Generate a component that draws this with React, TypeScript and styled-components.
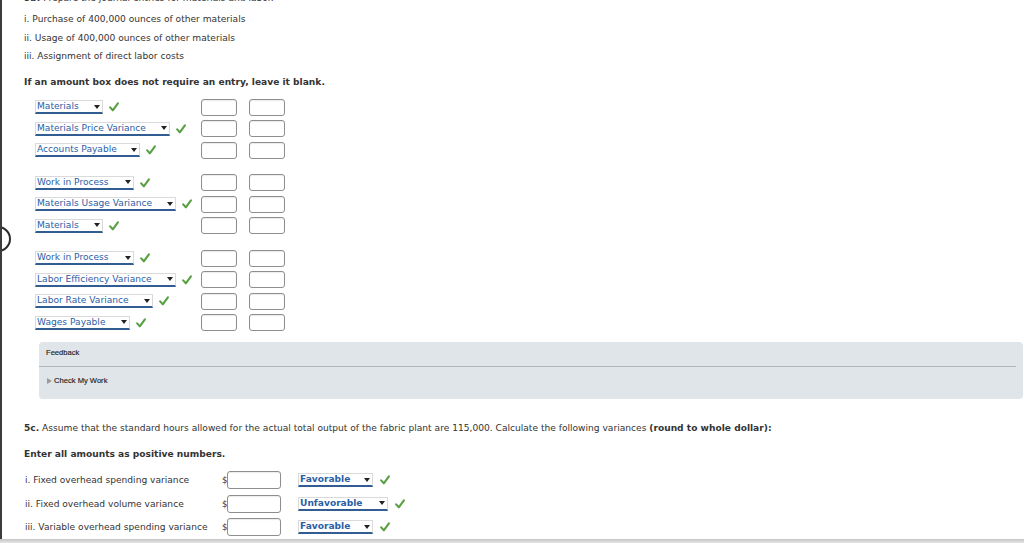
import styled, { createGlobalStyle } from 'styled-components';

const GlobalStyle = createGlobalStyle`
  html, body {
    margin: 0;
    padding: 0;
    background: #ffffff;
  }
  body {
    font-family: "DejaVu Sans", Verdana, sans-serif;
    font-size: 9.1px;
    color: #333333;
    overflow: hidden;
  }
`;

interface JournalLine {
  account: string;
  width: number;
}

const groups: JournalLine[][] = [
  [
    { account: 'Materials', width: 68 },
    { account: 'Materials Price Variance', width: 135 },
    { account: 'Accounts Payable', width: 105 },
  ],
  [
    { account: 'Work in Process', width: 99 },
    { account: 'Materials Usage Variance', width: 141 },
    { account: 'Materials', width: 68 },
  ],
  [
    { account: 'Work in Process', width: 99 },
    { account: 'Labor Efficiency Variance', width: 141 },
    { account: 'Labor Rate Variance', width: 118 },
    { account: 'Wages Payable', width: 95 },
  ],
];

const variances = [
  { label: 'i. Fixed overhead spending variance', result: 'Favorable', width: 75 },
  { label: 'ii. Fixed overhead volume variance', result: 'Unfavorable', width: 90 },
  { label: 'iii. Variable overhead spending variance', result: 'Favorable', width: 75 },
];

const Check = () => (
  <CheckMark viewBox="0 0 10 10">
    <path d="M1.2 5.4 L3.8 8.3 L8.9 1.3" fill="none" stroke="#58a043" strokeWidth="2.1" strokeLinecap="round" strokeLinejoin="round" />
  </CheckMark>
);

export default function App() {
  return (
    <>
      <GlobalStyle />
      <Page>
        <NavCircle />
        <Heading>
          <b>5b.</b> Prepare the journal entries for materials and labor.
        </Heading>
        <List>
          <Line>i. Purchase of 400,000 ounces of other materials</Line>
          <Line>ii. Usage of 400,000 ounces of other materials</Line>
          <Line>iii. Assignment of direct labor costs</Line>
        </List>
        <Instruction>If an amount box does not require an entry, leave it blank.</Instruction>

        <Journal>
          {groups.map((group, gi) => (
            <EntryGroup key={gi}>
              {group.map((line, li) => (
                <EntryRow key={li}>
                  <AccountCell>
                    <Select $width={line.width}>
                      <span>{line.account}</span>
                      <Arrow />
                    </Select>
                    <Check />
                  </AccountCell>
                  <AmountBox />
                  <AmountBox />
                </EntryRow>
              ))}
            </EntryGroup>
          ))}
        </Journal>

        <Feedback>
          <FeedbackTitle>Feedback</FeedbackTitle>
          <Rule />
          <CheckWork>
            <Triangle />
            Check My Work
          </CheckWork>
        </Feedback>

        <Question>
          <b>5c.</b> Assume that the standard hours allowed for the actual total output of the fabric plant are
          115,000. Calculate the following variances <b>(round to whole dollar):</b>
        </Question>
        <Instruction2>Enter all amounts as positive numbers.</Instruction2>

        <Variances>
          {variances.map((v, i) => (
            <VarianceRow key={i}>
              <VarianceLabel>{v.label}</VarianceLabel>
              <Dollar>$</Dollar>
              <MoneyBox />
              <ResultCell>
                <Select $width={v.width} $bold>
                  <span>{v.result}</span>
                  <Arrow />
                </Select>
                <Check />
              </ResultCell>
            </VarianceRow>
          ))}
        </Variances>
      </Page>
      <BottomBar />
    </>
  );
}

const Page = styled.div`
  position: relative;
  border-left: 2px solid #3c3c3c;
  padding-left: 22px;
  height: 539px;
  box-sizing: border-box;
  overflow: hidden;
`;

const NavCircle = styled.div`
  position: absolute;
  left: -17px;
  top: 226px;
  width: 22px;
  height: 22px;
  border: 2px solid #2b2b2b;
  border-radius: 50%;
  background: #ffffff;
`;

const Heading = styled.p`
  margin: -8px 0 0;
  line-height: 12px;
`;

const List = styled.div`
  padding-top: 6px;
`;

const Line = styled.p`
  margin: 0;
  line-height: 18.5px;
`;

const Instruction = styled.p`
  margin: 7px 0 0;
  line-height: 18.5px;
  font-weight: bold;
`;

const Journal = styled.div`
  margin: 5.5px 0 0 11px;
  display: flex;
  flex-direction: column;
  gap: 11px;
`;

const EntryGroup = styled.div`
  display: flex;
  flex-direction: column;
`;

const EntryRow = styled.div`
  display: flex;
  align-items: center;
  height: 21.5px;
`;

const AccountCell = styled.div`
  width: 166px;
  display: flex;
  align-items: center;
  gap: 6px;
`;

const Select = styled.div<{ $width: number; $bold?: boolean }>`
  box-sizing: border-box;
  width: ${(p) => p.$width}px;
  height: 14px;
  display: flex;
  align-items: center;
  justify-content: space-between;
  padding: 0 2px 0 1px;
  border: 1px solid #dadada;
  border-bottom: 2px solid #315d92;
  color: #2b5ea6;
  font-weight: ${(p) => (p.$bold ? 'bold' : 'normal')};
  line-height: 11px;
  background: #ffffff;
  white-space: nowrap;
`;

const Arrow = styled.span`
  width: 0;
  height: 0;
  border-left: 3px solid transparent;
  border-right: 3px solid transparent;
  border-top: 4px solid #222222;
`;

const CheckMark = styled.svg`
  width: 10px;
  height: 10px;
  flex: none;
`;

const AmountBox = styled.div`
  box-sizing: border-box;
  width: 36px;
  height: 17px;
  margin-right: 12px;
  border: 1px solid #8e8e8e;
  border-radius: 3px;
  background: #ffffff;
  box-shadow: inset 0 1px 1px rgba(0, 0, 0, 0.08);
`;

const Feedback = styled.div`
  margin: 8px 1px 0 15px;
  height: 57px;
  box-sizing: border-box;
  padding-top: 6px;
  background: #e0e5e9;
  border-radius: 4px;
  font-family: "Liberation Sans", Arial, sans-serif;
  font-size: 7.6px;
  color: #222222;
`;

const FeedbackTitle = styled.div`
  padding-left: 7px;
  line-height: 10px;
  -webkit-text-stroke: 0.15px #222;
`;

const Rule = styled.div`
  margin: 8px 7px 0 0;
  height: 1px;
  background: #b2b6b9;
`;

const CheckWork = styled.div`
  margin-top: 9px;
  padding-left: 8px;
  line-height: 10px;
  display: flex;
  align-items: center;
  gap: 2px;
  -webkit-text-stroke: 0.15px #222;
`;

const Triangle = styled.span`
  width: 0;
  height: 0;
  border-top: 3px solid transparent;
  border-bottom: 3px solid transparent;
  border-left: 5px solid #9a9a9a;
`;

const Question = styled.p`
  margin: 20px 0 0;
  line-height: 18px;
`;

const Instruction2 = styled.p`
  margin: 8px 0 0;
  line-height: 18px;
  font-weight: bold;
`;

const Variances = styled.div`
  margin: 6px 0 0 1px;
  display: flex;
  flex-direction: column;
`;

const VarianceRow = styled.div`
  display: flex;
  align-items: center;
  height: 23.5px;
`;

const VarianceLabel = styled.span`
  width: 197px;
  white-space: nowrap;
`;

const Dollar = styled.span`
  width: 5px;
  font-size: 8.5px;
`;

const MoneyBox = styled.div`
  box-sizing: border-box;
  width: 54px;
  height: 18px;
  margin-right: 17px;
  border: 1px solid #8e8e8e;
  border-radius: 3px;
  background: #ffffff;
  box-shadow: inset 0 1px 1px rgba(0, 0, 0, 0.08);
`;

const ResultCell = styled.div`
  display: flex;
  align-items: center;
  gap: 7px;
`;

const BottomBar = styled.div`
  height: 4px;
  background: linear-gradient(#c4c4c4, #e6e6e6);
`;
